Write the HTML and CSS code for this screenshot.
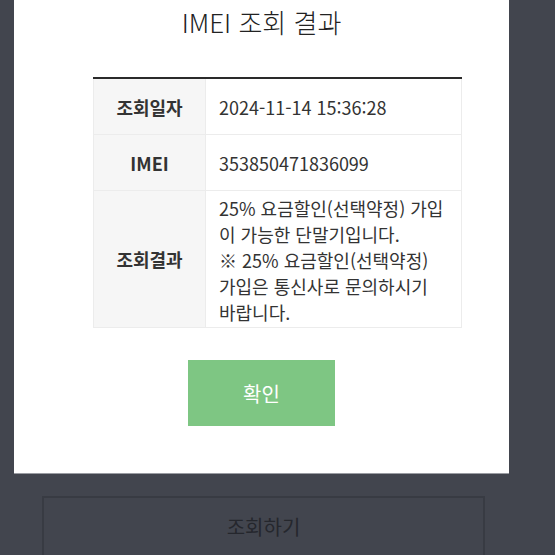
FILE: index.html
```html
<!DOCTYPE html>
<html lang="ko">
<head>
<meta charset="utf-8">
<link rel="stylesheet" href="styles.css">
</head>
<body>
<div class="modal">
  <h1 class="title">IMEI 조회 결과</h1>
  <table class="result">
    <tr>
      <th>조회일자</th>
      <td class="single">2024-11-14 15:36:28</td>
    </tr>
    <tr>
      <th>IMEI</th>
      <td class="single">353850471836099</td>
    </tr>
    <tr>
      <th>조회결과</th>
      <td class="multi">25% 요금할인(선택약정) 가입이 가능한 단말기입니다.<br>※ 25% 요금할인(선택약정) 가입은 통신사로 문의하시기 바랍니다.</td>
    </tr>
  </table>
  <div class="actions"><button class="ok">확인</button></div>
</div>
<div class="below">
  <button class="search">조회하기</button>
</div>
</body>
</html>
```

FILE: styles.css
```css
html, body {
  margin: 0;
  padding: 0;
  background: #42454e;
  font-family: "Noto Sans CJK KR", "Noto Sans", sans-serif;
}
.modal {
  width: 495px;
  height: 474px;
  margin-left: 14px;
  background: #fff;
  box-sizing: border-box;
  padding-top: 3px;
  border-bottom: 1px solid #9a9ca2;
}
.title {
  margin: 0;
  text-align: center;
  font-size: 26px;
  line-height: 38px;
  font-weight: 300;
  color: #222;
}
.result {
  margin-top: 36px;
  margin-left: 79px;
  width: 369px;
  border-collapse: collapse;
  border-top: 2px solid #2a2a2a;
  font-size: 18px;
  color: #333;
}
.result th {
  width: 111px;
  background: #f6f6f6;
  font-weight: 700;
  font-size: 18px;
  color: #333;
  border: 1px solid #ececec;
  padding: 0;
  text-align: center;
}
.result td {
  border: 1px solid #ececec;
  padding: 0 14px 0 13px;
  line-height: 26px;
  text-align: left;
}
.result td.single {
  height: 55px;
  padding-top: 0;
  padding-bottom: 0;
}
.result td.multi {
  padding-top: 4px;
  padding-bottom: 2px;
}
.actions {
  display: flex;
  justify-content: center;
  margin-top: 32px;
}
.ok {
  width: 147px;
  height: 66px;
  border: none;
  background: #7ec683;
  color: #fff;
  font-family: inherit;
  font-size: 20px;
  padding: 0;
}
.below {
  padding: 22px 0 0 42px;
}
.search {
  width: 443px;
  height: 70px;
  background: transparent;
  border: 2px solid #383b43;
  border-bottom: none;
  color: #25272d;
  font-family: inherit;
  font-size: 20px;
  padding: 0 0 12px;
}
```
